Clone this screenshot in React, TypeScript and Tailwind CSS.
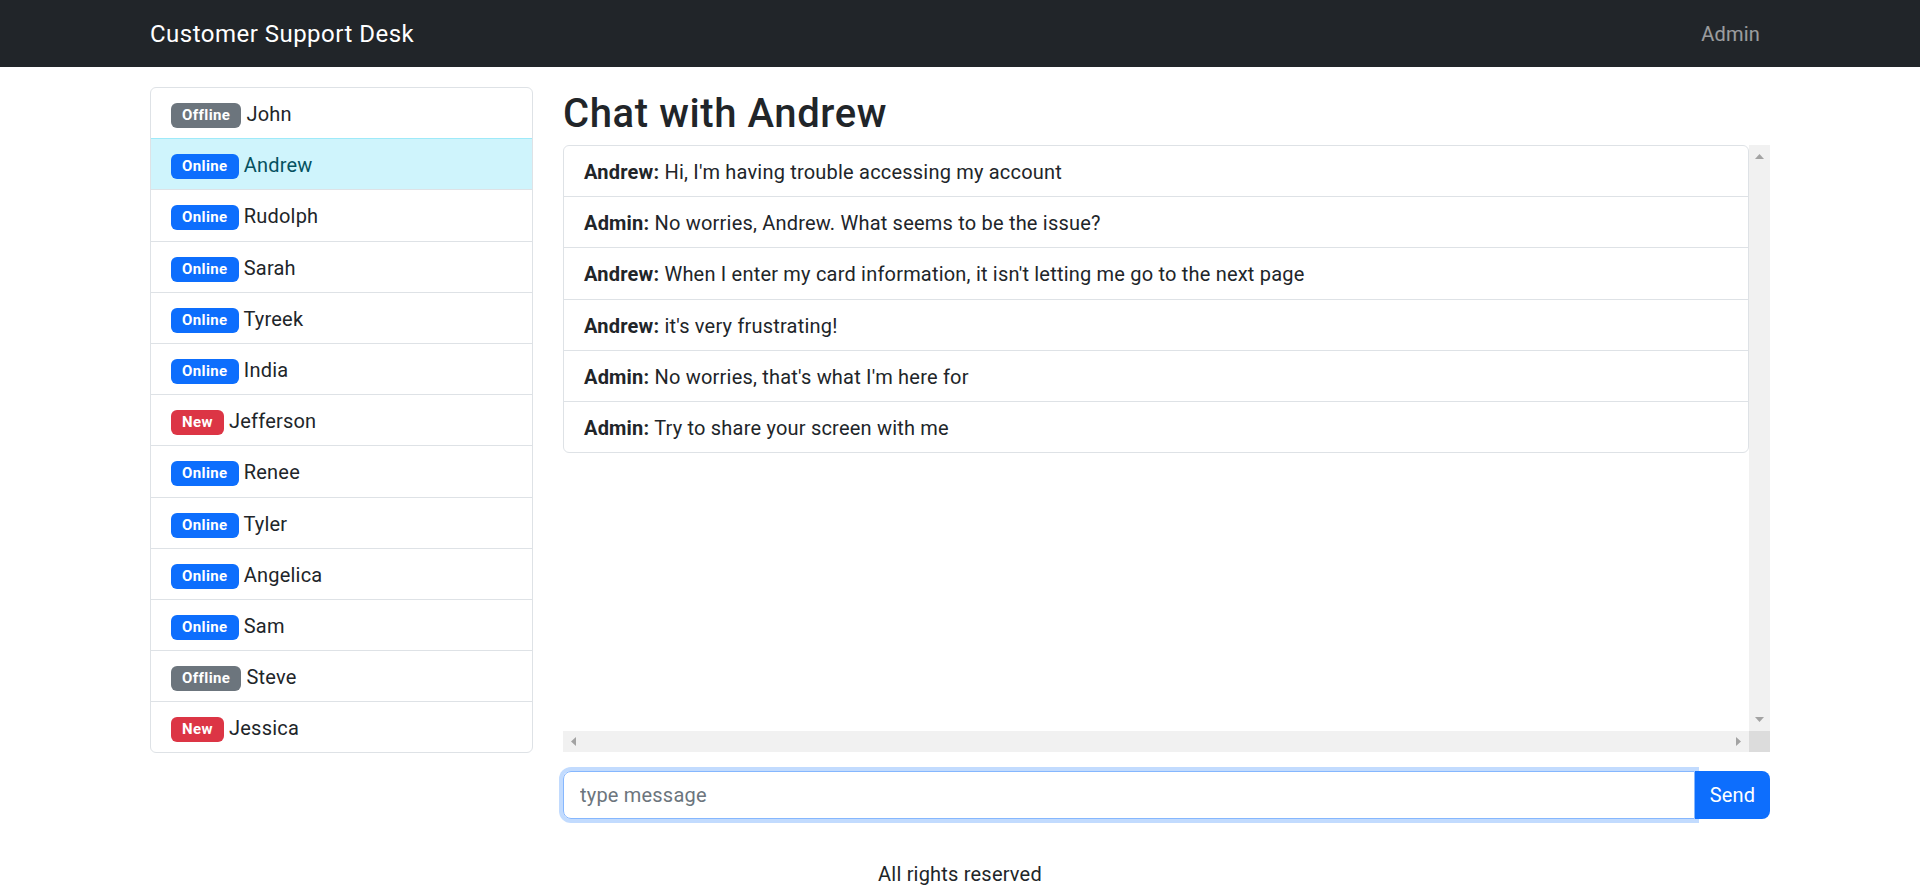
import React from "react";

type Status = "Online" | "Offline" | "New";

const users: { name: string; status: Status }[] = [
  { name: "John", status: "Offline" },
  { name: "Andrew", status: "Online" },
  { name: "Rudolph", status: "Online" },
  { name: "Sarah", status: "Online" },
  { name: "Tyreek", status: "Online" },
  { name: "India", status: "Online" },
  { name: "Jefferson", status: "New" },
  { name: "Renee", status: "Online" },
  { name: "Tyler", status: "Online" },
  { name: "Angelica", status: "Online" },
  { name: "Sam", status: "Online" },
  { name: "Steve", status: "Offline" },
  { name: "Jessica", status: "New" },
];

const messages = [
  { from: "Andrew", text: "Hi, I'm having trouble accessing my account" },
  { from: "Admin", text: "No worries, Andrew. What seems to be the issue?" },
  {
    from: "Andrew",
    text: "When I enter my card information, it isn't letting me go to the next page",
  },
  { from: "Andrew", text: "it's very frustrating!" },
  { from: "Admin", text: "No worries, that's what I'm here for" },
  { from: "Admin", text: "Try to share your screen with me" },
];

const badgeColor: Record<Status, string> = {
  Online: "bg-[#0d6efd]",
  Offline: "bg-[#6c757d]",
  New: "bg-[#dc3545]",
};

const Badge = ({ status }: { status: Status }) => (
  <span
    className={`${badgeColor[status]} inline-block rounded-[6px] px-[11px] py-[5px] text-[15px] leading-[15px] font-bold tracking-[0.4px] text-white align-[1px]`}
  >
    {status}
  </span>
);

// little grey arrows of the (always visible) scrollbars
const Arrow = ({ dir }: { dir: "up" | "down" | "left" | "right" }) => {
  const pts = {
    up: "0,5 9,5 4.5,0",
    down: "0,0 9,0 4.5,5",
    left: "5,0 5,9 0,4.5",
    right: "0,0 0,9 5,4.5",
  }[dir];
  const vertical = dir === "up" || dir === "down";
  return (
    <svg
      width={vertical ? 9 : 5}
      height={vertical ? 5 : 9}
      viewBox={vertical ? "0 0 9 5" : "0 0 5 9"}
    >
      <polygon points={pts} fill="#a3a3a3" />
    </svg>
  );
};

const UserList = () => {
  const selected = "Andrew";
  return (
    <div className="w-[383px] shrink-0 self-start rounded-[6px] border border-[#dee2e6] overflow-hidden">
      {users.map((u, i) => (
        <div
          key={u.name}
          className={`px-[20px] pt-[11px] pb-[9.2px] text-[20px] leading-[30px] tracking-[0.01em] ${
            i > 0 ? "border-t" : ""
          } ${
            u.name === selected
              ? "bg-[#cff4fc] text-[#055160] border-[#9eeaf9]"
              : "text-[#212529] border-[#dee2e6]"
          }`}
        >
          <Badge status={u.status} /> {u.name}
        </div>
      ))}
    </div>
  );
};

const ChatBox = () => (
  <div className="flex-1 min-w-0">
    <h1 className="mt-[3px] mb-[7px] text-[40px] leading-[48px] font-medium tracking-[0.015em] text-[#212529]">
      Chat with Andrew
    </h1>
    <div className="h-[607px] flex flex-col">
      <div className="flex-1 min-h-0 flex">
        <div className="flex-1 min-w-0 overflow-hidden">
          <div className="rounded-[6px] border border-[#dee2e6]">
            {messages.map((m, i) => (
              <div
                key={i}
                className={`px-[20px] pt-[11px] pb-[9.2px] text-[20px] leading-[30px] tracking-[0.01em] text-[#212529] ${
                  i > 0 ? "border-t border-[#dee2e6]" : ""
                }`}
              >
                <b className="font-bold">{m.from}:</b> {m.text}
              </div>
            ))}
          </div>
        </div>
        <div className="w-[21px] shrink-0 bg-[#f1f1f1] flex flex-col items-center justify-between py-[9px]">
          <Arrow dir="up" />
          <Arrow dir="down" />
        </div>
      </div>
      <div className="h-[21px] flex">
        <div className="flex-1 bg-[#f1f1f1] flex items-center justify-between px-[8px]">
          <Arrow dir="left" />
          <Arrow dir="right" />
        </div>
        <div className="w-[21px] bg-[#dcdcdc]" />
      </div>
    </div>
    <form className="mt-[19px] flex" onSubmit={(e) => e.preventDefault()}>
      <input
        type="text"
        placeholder="type message"
        autoFocus
        className="flex-1 min-w-0 h-[48px] rounded-l-[8px] border border-[#86b7fe] px-[16px] text-[20px] tracking-[0.01em] text-[#212529] placeholder:text-[#6c757d] outline-none shadow-[0_0_0_4px_rgba(13,110,253,0.25)]"
      />
      <button
        type="submit"
        className="relative z-10 w-[75px] h-[48px] rounded-r-[8px] bg-[#0d6efd] text-white text-[20px] tracking-[0.01em]"
      >
        Send
      </button>
    </form>
  </div>
);

export default function App() {
  return (
    <div className="min-h-screen bg-white font-['Segoe_UI',Roboto,'Noto_Sans',sans-serif] text-[#212529]">
      <nav className="h-[67px] bg-[#212529]">
        <div className="mx-[150px] h-full flex items-center justify-between">
          <span className="text-[24px] tracking-[0.02em] text-white">
            Customer Support Desk
          </span>
          <span className="pr-[10px] text-[20px] tracking-[0.01em] text-white/55">
            Admin
          </span>
        </div>
      </nav>
      <main className="mx-[150px] mt-[20px] flex gap-[30px]">
        <UserList />
        <ChatBox />
      </main>
      <footer className="mt-[40px] text-center text-[20px] leading-[30px] tracking-[0.01em]">
        All rights reserved
      </footer>
    </div>
  );
}
